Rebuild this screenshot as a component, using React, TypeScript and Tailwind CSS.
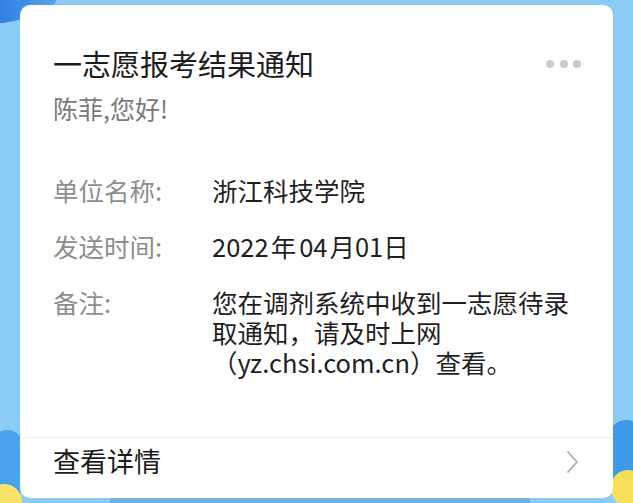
export default function App() {
  return (
    <div
      className="relative w-[633px] h-[503px] overflow-hidden bg-[#8dcbf7] px-[20px] pt-[5px]"
      style={{ fontFamily: '"Noto Sans CJK SC", "Noto Sans", sans-serif' }}
    >
      {/* background decoration */}
      <div className="absolute -left-[30px] -top-[40px] h-[60px] w-[90px] rotate-[-12deg] rounded-full bg-gradient-to-r from-[#1f6fdc] to-[#5aa8ef]" />
      <div className="absolute -left-[10px] top-[430px] h-[70px] w-[34px] rounded-full bg-[#4aa2ec]" />
      <div className="absolute -left-[14px] top-[484px] h-[40px] w-[36px] rounded-full bg-[#f7e36a]" />
      <div className="absolute -right-[10px] top-[420px] h-[70px] w-[34px] rounded-full bg-[#3f98e8]" />
      <div className="absolute -right-[12px] top-[470px] h-[36px] w-[34px] rounded-full bg-[#f6df5a]" />
      <div className="absolute left-[110px] top-[497px] h-[8px] w-[420px] bg-[#6fb3ea]" />

      {/* card */}
      <div className="relative flex h-[493px] w-[593px] flex-col rounded-[10px] bg-white">
        <div className="flex-1 pl-[33px] pr-[32px] pt-[41px]">
          <div className="flex items-center justify-between">
            <div className="text-[29px] leading-[35px] text-[#1c1c1c]">一志愿报考结果通知</div>
            <div className="flex gap-[5.5px]">
              <span className="h-[8px] w-[8px] rounded-full bg-[#cacaca]" />
              <span className="h-[8px] w-[8px] rounded-full bg-[#cacaca]" />
              <span className="h-[8px] w-[8px] rounded-full bg-[#cacaca]" />
            </div>
          </div>
          <div className="mt-[11px] text-[25px] leading-[32px] text-[#7a7a7a]">陈菲,您好!</div>

          <div className="mt-[50px] flex flex-col text-[25.5px]">
            <div className="flex leading-[32px]">
              <div className="w-[159px] text-[#8e8e8e]">单位名称:</div>
              <div className="text-[#1f1f1f]">浙江科技学院</div>
            </div>
            <div className="mt-[24px] flex leading-[32px]">
              <div className="w-[159px] text-[#8e8e8e]">发送时间:</div>
              <div className="flex text-[#1f1f1f]">
                <span>2022</span>
                <span className="ml-[2px]">年</span>
                <span className="ml-[3px]">04</span>
                <span className="ml-[2px]">月</span>
                <span>01日</span>
              </div>
            </div>
            <div className="mt-[24px] flex">
              <div className="w-[159px] leading-[31px] text-[#8e8e8e]">备注:</div>
              <div className="flex flex-col text-[#1f1f1f]">
                <div className="h-[31px] leading-[31px]">您在调剂系统中收到一志愿待录</div>
                <div className="h-[30px] leading-[30px]">取通知，请及时上网</div>
                <div className="h-[30px] leading-[30px]">（yz.chsi.com.cn）查看。</div>
              </div>
            </div>
          </div>
        </div>

        <div className="flex h-[61px] items-start justify-between border-t border-[#ededed] pl-[33px] pr-[34px] pt-[7px]">
          <div className="text-[27px] leading-[32px] text-[#1c1c1c]">查看详情</div>
          <svg width="13" height="24" viewBox="0 0 13 24" className="mt-[5px]">
            <polyline points="1.5,1.5 11,12 1.5,22.5" fill="none" stroke="#a8a8a8" strokeWidth="1.6" />
          </svg>
        </div>
      </div>
    </div>
  )
}
